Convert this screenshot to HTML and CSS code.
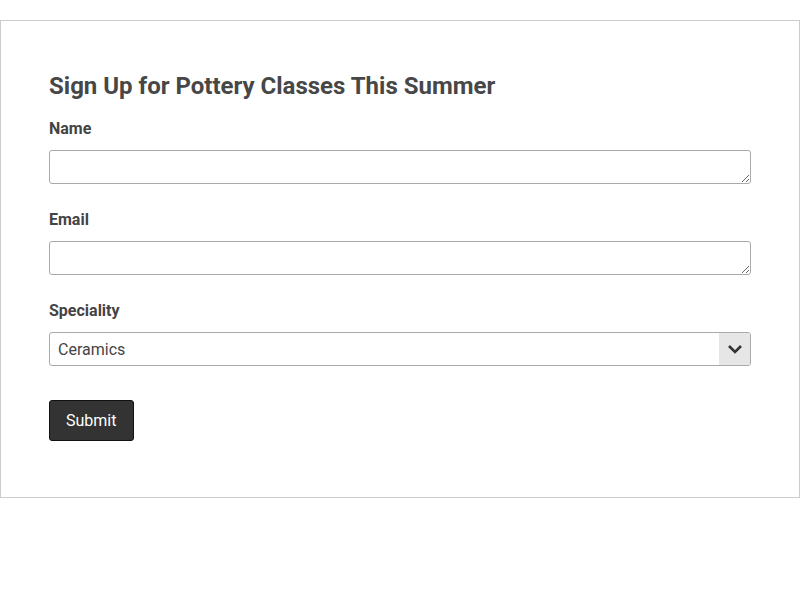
FILE: index.html
```html
<!DOCTYPE html>
<html lang="en">
<head>
    <meta charset="UTF-8">
    <meta name="viewport" content="width=device-width, initial-scale=1.0">
    <title>Pottery Classes</title>
    <link rel="stylesheet" href="styles.css">
</head>
<body>
    <div class="container">
        <h2>Sign Up for Pottery Classes This Summer</h2>
        <form class="signup">
            <div class="field">
                <label for="name">Name</label>
                <textarea id="name" rows="1"></textarea>
            </div>
            <div class="field">
                <label for="email">Email</label>
                <textarea id="email" rows="1"></textarea>
            </div>
            <div class="field">
                <label for="speciality">Speciality</label>
                <div class="select-wrap">
                    <select id="speciality">
                        <option>Ceramics</option>
                        <option>Wheel Throwing</option>
                        <option>Hand Building</option>
                    </select>
                    <span class="select-arrow">
                        <svg width="16" height="10" viewBox="0 0 16 10"><path d="M2 2 L8 8 L14 2" fill="none" stroke="#333" stroke-width="2.6"/></svg>
                    </span>
                </div>
            </div>
            <button type="button">Submit</button>
        </form>
    </div>
</body>
</html>
```

FILE: styles.css
```css
body {
    font-family: Roboto, Arial, sans-serif;
    margin: 0;
    padding: 20px 0 0;
    color: #444;
    background: #fff;
}
.container {
    border: 1px solid #ccc;
    padding: 51px 48px 56px;
}
h2 {
    font-size: 24px;
    font-weight: 700;
    margin: 0 0 19px;
    color: #474747;
}
.field {
    margin-bottom: 26px;
}
.field:last-of-type {
    margin-bottom: 34px;
}
label {
    display: block;
    font-size: 16px;
    font-weight: 700;
    margin-bottom: 12px;
}
textarea {
    display: block;
    width: 100%;
    height: 34px;
    box-sizing: border-box;
    border: 1px solid #aaa;
    border-radius: 3px;
    font-family: inherit;
    font-size: 16px;
    padding: 6px 8px;
    resize: vertical;
}
.select-wrap {
    position: relative;
}
select {
    display: block;
    width: 100%;
    height: 34px;
    box-sizing: border-box;
    appearance: none;
    -webkit-appearance: none;
    border: 1px solid #aaa;
    border-radius: 3px;
    background: #fff;
    font-family: inherit;
    font-size: 16px;
    color: #444;
    padding: 0 40px 0 8px;
}
.select-arrow {
    position: absolute;
    top: 1px;
    right: 1px;
    width: 31px;
    height: 32px;
    background: #e6e6e6;
    border-radius: 0 2px 2px 0;
    display: flex;
    align-items: center;
    justify-content: center;
    pointer-events: none;
}
button {
    font-family: inherit;
    font-size: 16px;
    color: #fff;
    background: #333;
    border: 1px solid #111;
    border-radius: 3px;
    padding: 0 17px 0 16px;
    height: 41px;
    cursor: pointer;
}
```
